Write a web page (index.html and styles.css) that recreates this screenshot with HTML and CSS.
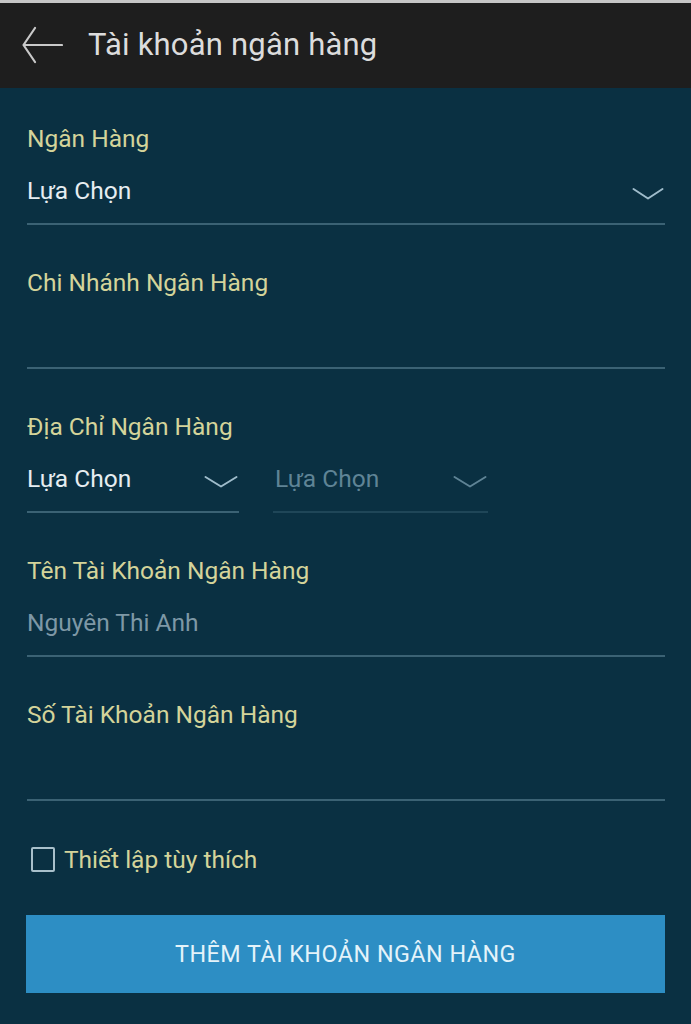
FILE: index.html
```html
<!DOCTYPE html>
<html lang="vi">
<head>
<meta charset="utf-8">
<title>Tài khoản ngân hàng</title>
<link rel="stylesheet" href="styles.css">
</head>
<body>
<div class="app">
  <header class="topbar">
    <svg class="back" width="42" height="38" viewBox="0 0 42 38" aria-hidden="true">
      <path d="M41 19 H3 M14 2 L2.5 19 L14 36" fill="none" stroke="#c9c9c9" stroke-width="2.2" stroke-linecap="round" stroke-linejoin="round"/>
    </svg>
    <h1 class="title">Tài khoản ngân hàng</h1>
  </header>
  <main class="form">
    <div class="field">
      <div class="label">Ngân Hàng</div>
      <div class="value select">
        <span class="text">Lựa Chọn</span>
        <svg class="chev" width="32" height="14" viewBox="0 0 32 14" aria-hidden="true"><path d="M1.5 2 L16 11.5 L30.5 2" fill="none" stroke="#9fbccb" stroke-width="2" stroke-linecap="round" stroke-linejoin="round"/></svg>
      </div>
    </div>
    <div class="field">
      <div class="label">Chi Nhánh Ngân Hàng</div>
      <div class="value"><span class="text">&nbsp;</span></div>
    </div>
    <div class="field">
      <div class="label">Địa Chỉ Ngân Hàng</div>
      <div class="pair">
        <div class="value select">
          <span class="text">Lựa Chọn</span>
          <svg class="chev" width="34" height="14" viewBox="0 0 34 14" aria-hidden="true"><path d="M1.5 2 L17 11.5 L32.5 2" fill="none" stroke="#9fbccb" stroke-width="2" stroke-linecap="round" stroke-linejoin="round"/></svg>
        </div>
        <div class="value select dim">
          <span class="text">Lựa Chọn</span>
          <svg class="chev" width="34" height="14" viewBox="0 0 34 14" aria-hidden="true"><path d="M1.5 2 L17 11.5 L32.5 2" fill="none" stroke="#5f8496" stroke-width="2" stroke-linecap="round" stroke-linejoin="round"/></svg>
        </div>
      </div>
    </div>
    <div class="field">
      <div class="label">Tên Tài Khoản Ngân Hàng</div>
      <div class="value"><span class="text placeholder">Nguyên Thi Anh</span></div>
    </div>
    <div class="field">
      <div class="label">Số Tài Khoản Ngân Hàng</div>
      <div class="value"><span class="text">&nbsp;</span></div>
    </div>
    <label class="check">
      <span class="box"></span>
      <span class="check-text">Thiết lập tùy thích</span>
    </label>
    <button class="submit" type="button">THÊM TÀI KHOẢN NGÂN HÀNG</button>
  </main>
</div>
</body>
</html>
```

FILE: styles.css
```css
html, body {
  margin: 0;
  padding: 0;
  background: #0a3042;
}
body {
  font-family: Roboto, "Noto Sans", "Liberation Sans", sans-serif;
  width: 691px;
  height: 1024px;
  overflow: hidden;
}
.app {
  border-top: 3px solid #c6c6c6;
  background: #0a3042;
  min-height: 1021px;
}
.topbar {
  height: 85px;
  background: #1e1e1e;
  display: flex;
  align-items: center;
  padding-left: 21px;
  box-sizing: border-box;
}
.back {
  display: block;
  margin-right: 25px;
  margin-top: -1px;
}
.title {
  margin: 0;
  font-weight: 400;
  font-size: 31px;
  color: #dcdcdc;
  letter-spacing: 0.2px;
  margin-top: -3px;
}
.form {
  padding: 36px 26px 0 27px;
}
.field {
  margin-bottom: 43px;
}
.label {
  font-size: 24.5px;
  line-height: 30px;
  height: 30px;
  color: #d4d49a;
  margin-bottom: 22px;
}
.value {
  height: 30px;
  line-height: 30px;
  padding-bottom: 17px;
  border-bottom: 2px solid #3b6274;
  display: flex;
  align-items: center;
  justify-content: space-between;
  font-size: 24.5px;
  color: #e6edf1;
}
.value .text {
  white-space: nowrap;
}
.placeholder {
  color: #7e98a6;
}
.chev {
  display: block;
  margin-top: 6px;
  margin-right: 1px;
}
.pair {
  display: flex;
  gap: 34px;
  width: 461px;
}
.pair .value {
  flex: 0 0 212px;
}
.pair .value.dim {
  flex: 0 0 215px;
  border-bottom-color: #1f4658;
  color: #5f8496;
}
.pair .value.dim .text {
  padding-left: 2px;
}
.check {
  display: flex;
  align-items: center;
  height: 30px;
  margin-top: 2px;
  padding-left: 4px;
}
.box {
  width: 20px;
  height: 21px;
  border: 2px solid #a9c0cb;
  border-radius: 2px;
  margin-right: 9px;
}
.check-text {
  font-size: 24.5px;
  color: #d4d49a;
}
.submit {
  display: block;
  width: 639px;
  height: 78px;
  margin-top: 41px;
  margin-left: -1px;
  border: none;
  background: #2d8ec4;
  color: #e4f3fa;
  font-family: Roboto, "Noto Sans", "Liberation Sans", sans-serif;
  font-size: 23.3px;
  letter-spacing: 0.5px;
  padding: 0;
}
```
